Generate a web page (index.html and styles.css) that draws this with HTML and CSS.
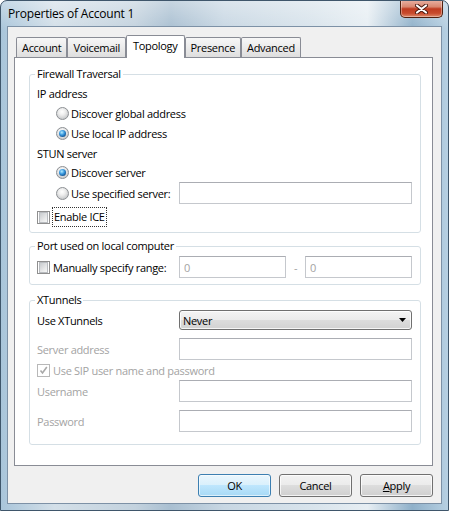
FILE: index.html
```html
<!DOCTYPE html>
<html lang="en">
<head>
    <meta charset="UTF-8">
    <meta name="viewport" content="width=device-width, initial-scale=1.0">
    <title>Properties of Account 1</title>
    <link rel="stylesheet" href="styles.css">
</head>
<body>
    <div class="window">
        <div class="titlebar">
            <span class="title">Properties of Account 1</span>
            <button class="close-btn" title="Close">
                <svg width="13" height="10" viewBox="0 0 13 10">
                    <path d="M2 1.5 L11 8.5 M11 1.5 L2 8.5" stroke="#4a1a10" stroke-width="4" stroke-linecap="round"/>
                    <path d="M2 1.5 L11 8.5 M11 1.5 L2 8.5" stroke="#ffffff" stroke-width="2.2" stroke-linecap="round"/>
                </svg>
            </button>
        </div>

        <div class="client">
            <!-- Tabs -->
            <div class="tabs">
                <div class="tab">Account</div>
                <div class="tab">Voicemail</div>
                <div class="tab active">Topology</div>
                <div class="tab">Presence</div>
                <div class="tab">Advanced</div>
            </div>

            <div class="panel">
                <!-- Firewall Traversal -->
                <fieldset class="group group-firewall">
                    <legend>Firewall Traversal</legend>
                    <div class="line">IP address</div>
                    <div class="line indent"><span class="radio"></span>Discover global address</div>
                    <div class="line indent"><span class="radio on"></span>Use local IP address</div>
                    <div class="line">STUN server</div>
                    <div class="line indent tight"><span class="radio on"></span>Discover server</div>
                    <div class="form-row">
                        <div class="line indent"><span class="radio"></span>Use specified server:</div>
                        <input class="textbox" type="text">
                    </div>
                    <div class="line check-line"><span class="check"></span><span class="focus">Enable ICE</span></div>
                </fieldset>

                <!-- Port used on local computer -->
                <fieldset class="group group-port">
                    <legend>Port used on local computer</legend>
                    <div class="form-row port-row">
                        <div class="line"><span class="check"></span>Manually specify range:</div>
                        <input class="textbox" type="text" value="0" disabled>
                        <span class="dash">-</span>
                        <input class="textbox" type="text" value="0" disabled>
                    </div>
                </fieldset>

                <!-- XTunnels -->
                <fieldset class="group group-xtunnels">
                    <legend>XTunnels</legend>
                    <div class="form-row">
                        <span>Use XTunnels</span>
                        <div class="combo">
                            <span>Never</span>
                            <svg width="7" height="4" viewBox="0 0 7 4"><path d="M0 0 H7 L3.5 4 Z" fill="#000"/></svg>
                        </div>
                    </div>
                    <div class="form-row spaced">
                        <span class="disabled">Server address</span>
                        <input class="textbox" type="text" disabled>
                    </div>
                    <div class="line disabled">
                        <span class="check checked">
                            <svg width="9" height="9" viewBox="0 0 9 9"><path d="M1.5 4.5 L3.5 7 L7.8 1" fill="none" stroke="#a9a9a9" stroke-width="1.6"/></svg>
                        </span>Use SIP user name and password
                    </div>
                    <div class="form-row">
                        <span class="disabled">Username</span>
                        <input class="textbox" type="text" disabled>
                    </div>
                    <div class="form-row spaced-lg">
                        <span class="disabled">Password</span>
                        <input class="textbox" type="password" disabled>
                    </div>
                </fieldset>
            </div>

            <!-- Dialog buttons -->
            <div class="buttons">
                <button class="btn default">OK</button>
                <button class="btn">Cancel</button>
                <button class="btn"><u>A</u>pply</button>
            </div>
        </div>
    </div>
</body>
</html>
```

FILE: styles.css
```css
* {
    box-sizing: border-box;
}

body {
    margin: 0;
    font-family: "Open Sans", "Noto Sans", sans-serif;
    font-size: 11px;
    letter-spacing: -0.3px;
    color: #000;
    background: #fff;
}

/* Aero window frame */
.window {
    width: 449px;
    height: 511px;
    display: flex;
    flex-direction: column;
    padding: 0 7px 7px;
    border: 1px solid #3f566b;
    border-radius: 7px 7px 0 0;
    overflow: hidden;
    background:
        linear-gradient(180deg, rgba(255,255,255,0.35) 0%, rgba(255,255,255,0) 30px),
        linear-gradient(90deg, #a9c5da 0%, #d3dfe8 12%, #c3d2de 30%, #a9bfd1 38%, #c8d7e3 50%, #d9e4ec 70%, #e7eef3 82%, #8fb0c9 92%, #b7d0e2 100%);
}

.titlebar {
    height: 26px;
    display: flex;
    align-items: flex-start;
    flex: none;
}

.title {
    line-height: 26px;
    font-size: 12px;
    letter-spacing: -0.2px;
    color: #000;
}

.close-btn {
    margin-left: auto;
    margin-top: -1px;
    margin-right: -2px;
    width: 43px;
    height: 18px;
    padding: 0;
    display: flex;
    align-items: center;
    justify-content: center;
    border: 1px solid #51200f;
    border-top: none;
    border-radius: 0 0 5px 5px;
    background: linear-gradient(180deg, #e9b3a5 0%, #d98770 40%, #bf3c21 52%, #c84b2d 78%, #de8a6b 100%);
    box-shadow: inset 0 0 0 1px rgba(255,255,255,0.35);
}

/* Dialog client area */
.client {
    height: 476px;
    flex: none;
    display: flex;
    flex-direction: column;
    padding: 8px 8px 6px 6px;
    background: #f0f0f0;
    outline: 1px solid #7d91a6;
}

/* Tabs */
.tabs {
    height: 22px;
    display: flex;
    align-items: flex-end;
    padding-left: 2px;
}

.tab {
    height: 20px;
    line-height: 19px;
    padding: 0 5px;
    border: 1px solid #898c95;
    border-bottom: none;
    border-radius: 2px 2px 0 0;
    background: linear-gradient(180deg, #f7f7f7 0%, #ebebeb 50%, #dedede 100%);
}

.tab.active {
    position: relative;
    z-index: 1;
    height: 23px;
    line-height: 20px;
    margin-bottom: -1px;
    padding: 0 6px;
    background: #fff;
}

.panel {
    flex: none;
    border: 1px solid #898c95;
    background: #fff;
    padding: 9px 11px 20px 14px;
}

/* Group boxes */
.group {
    margin: 0;
    min-width: 0;
    padding: 2px 8px 5px 7px;
    border: 1px solid #d5dfe5;
    border-radius: 3px;
}

.group legend {
    padding: 0 2px;
    margin-left: -2px;
    line-height: 14px;
}

.group-port {
    margin-top: 6px;
    padding: 3px 8px 6px 7px;
}

.group-xtunnels {
    margin-top: 8px;
    padding: 2px 8px 12px 7px;
}

.line {
    height: 20px;
    display: flex;
    align-items: center;
    gap: 3px;
    white-space: nowrap;
}

.line.indent {
    padding-left: 19px;
    gap: 2px;
}

.line.tight {
    height: 19px;
}

.check-line {
    margin-top: 3px;
}

.focus {
    outline: 1px dotted #333;
    padding: 1px 1px 2px;
}

.form-row {
    height: 22px;
    display: grid;
    grid-template-columns: 142px 233px;
    align-items: center;
}

.form-row.spaced {
    margin-top: 7px;
}

.form-row.spaced-lg {
    margin-top: 8px;
}

.port-row {
    grid-template-columns: 142px 107px 19px 107px;
}

.dash {
    text-align: center;
    color: #a3a3a3;
}

.disabled {
    color: #a3a3a3;
}

/* Controls */
.radio {
    width: 13px;
    height: 13px;
    flex: none;
    display: flex;
    align-items: center;
    justify-content: center;
    border-radius: 50%;
    border: 1px solid #8c8f93;
    background: radial-gradient(circle at 45% 35%, #ffffff 0%, #eeeeee 35%, #c9cbcd 75%, #e9e9e9 100%);
}

.radio.on::after {
    content: "";
    width: 7px;
    height: 7px;
    border-radius: 50%;
    background: radial-gradient(circle at 40% 35%, #b5ecff 0%, #3a9ae0 40%, #0e4c8a 80%, #0a2f5c 100%);
}

.check {
    width: 13px;
    height: 13px;
    flex: none;
    display: flex;
    align-items: center;
    justify-content: center;
    border: 1px solid #8f8f8f;
    padding: 1px;
    background: #fff;
}

.check::before {
    content: "";
    width: 9px;
    height: 9px;
    border: 1px solid #b9bcc0;
    background: linear-gradient(135deg, #c8cbce 0%, #e6e7e8 60%, #f7f7f7 100%);
}

.check.checked {
    border-color: #b8b8b8;
}

.check.checked::before {
    display: none;
}

.textbox {
    width: 233px;
    height: 22px;
    margin: 0;
    padding: 0 4px;
    font: inherit;
    letter-spacing: inherit;
    color: #000;
    background: #fff;
    border: 1px solid #c5c8cd;
    border-top-color: #abadb3;
    outline: none;
}

.port-row .textbox {
    width: 107px;
}

.textbox:disabled {
    color: #a3a3a3;
    background: #fff;
}

.combo {
    width: 233px;
    height: 20px;
    display: flex;
    align-items: center;
    justify-content: space-between;
    padding: 0 5px 0 3px;
    border: 1px solid #707070;
    border-radius: 3px;
    background: linear-gradient(180deg, #f4f4f4 0%, #ebebeb 50%, #dddddd 50%, #d2d2d2 100%);
    box-shadow: inset 0 0 0 1px rgba(255,255,255,0.8);
}

/* Dialog buttons */
.buttons {
    display: flex;
    justify-content: flex-end;
    gap: 8px;
    margin-top: 8px;
}

.btn {
    width: 73px;
    height: 23px;
    padding: 0;
    font: inherit;
    letter-spacing: inherit;
    color: #000;
    border: 1px solid #707070;
    border-radius: 3px;
    background: linear-gradient(180deg, #f2f2f2 0%, #ebebeb 50%, #dddddd 50%, #cfcfcf 100%);
    box-shadow: inset 0 0 0 1px rgba(255,255,255,0.75);
}

.btn.default {
    border-color: #3c7fb1;
    background: linear-gradient(180deg, #eaf6fd 0%, #d9f0fc 50%, #bee6fd 50%, #a7d9f5 100%);
    box-shadow: inset 0 0 0 1px rgba(255,255,255,0.6);
}
```
